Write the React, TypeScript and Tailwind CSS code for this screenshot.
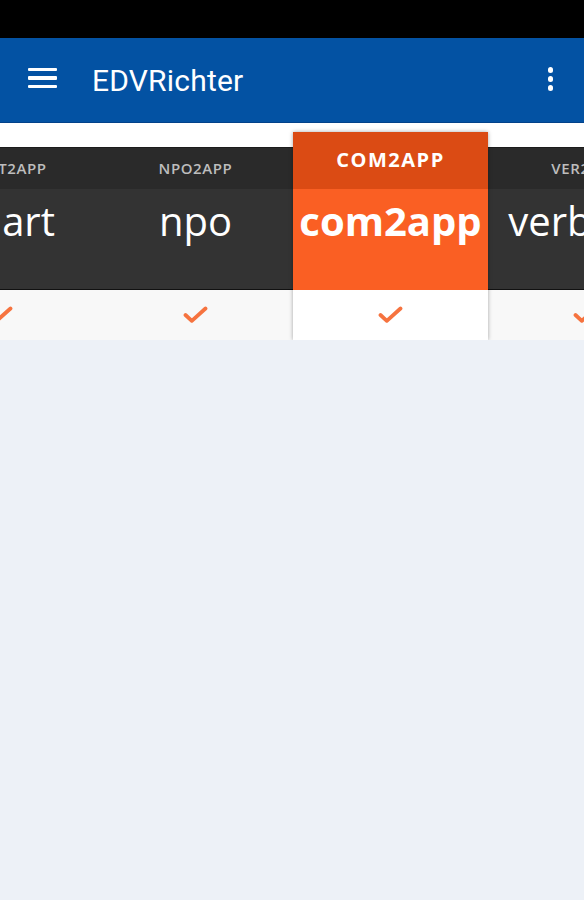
import { ReactNode } from 'react';

type App2 = {
  code: string;
  name: string;
  active?: boolean;
};

const apps: App2[] = [
  { code: 'SMART2APP', name: 'smart' },
  { code: 'NPO2APP', name: 'npo' },
  { code: 'COM2APP', name: 'com2app', active: true },
  { code: 'VER2APP', name: 'verband' },
];

function CheckMark() {
  return (
    <svg width="25" height="18" viewBox="0 0 25 18" fill="none">
      <path d="M2.5 9 8.8 14.8 22.5 2.5" stroke="#f6733f" strokeWidth="3.8" strokeLinecap="round" strokeLinejoin="round" />
    </svg>
  );
}

function Column({ app }: { app: App2 }): ReactNode {
  if (app.active) {
    return (
      <div className="w-[195px] shrink-0 flex flex-col relative z-10 shadow-[0_0_4px_rgba(0,0,0,0.35)]">
        <div className="h-[57px] bg-[#db4b14] flex items-center justify-center pb-[2px] text-[20px] font-bold tracking-[1.5px] text-white">
          {app.code}
        </div>
        <div className="h-[101px] bg-[#fa5f23] flex justify-center pt-[5px]">
          <span className="text-[40px] font-bold leading-[54px] text-white whitespace-nowrap">{app.name}</span>
        </div>
        <div className="h-[50px] bg-white flex items-center justify-center">
          <CheckMark />
        </div>
      </div>
    );
  }
  return (
    <div className="w-[195px] shrink-0 flex flex-col">
      <div className="h-[42px] bg-[#2a2a2a] border-t border-[#1c1c1c] flex items-center justify-center text-[15px] font-semibold tracking-[0.6px] text-[#bdbdbd] whitespace-nowrap">
        {app.code}
      </div>
      <div className="h-[101px] bg-[#333333] border-b border-[#111] flex justify-center pt-[5px]">
        <span className="text-[40px] leading-[54px] text-white whitespace-nowrap">{app.name}</span>
      </div>
      <div className="h-[50px] bg-[#f8f8f8] flex items-center justify-center">
        <CheckMark />
      </div>
    </div>
  );
}

export default function App() {
  return (
    <div className="w-[584px] h-[900px] bg-[#edf1f7] overflow-hidden flex flex-col">
      {/* status bar */}
      <div className="h-[38px] bg-black shrink-0" />

      {/* app bar */}
      <header className="h-[85px] shrink-0 bg-[#0352a3] border-b border-[#02428a] flex items-center pl-[28px] pr-[31px]">
        <div className="w-[29px] flex flex-col gap-[5px] mb-[4px]">
          <span className="h-[3.5px] bg-white rounded-[1px]" />
          <span className="h-[3.5px] bg-white rounded-[1px]" />
          <span className="h-[3.5px] bg-white rounded-[1px]" />
        </div>
        <h1 className="ml-[35px] text-[30px] leading-[36px] pt-[2px] text-white font-['Roboto',sans-serif] tracking-[0.2px]">EDVRichter</h1>
        <div className="ml-auto flex flex-col gap-[3.5px] mb-[2px]">
          <span className="w-[5.5px] h-[5.5px] rounded-full bg-white" />
          <span className="w-[5.5px] h-[5.5px] rounded-full bg-white" />
          <span className="w-[5.5px] h-[5.5px] rounded-full bg-white" />
        </div>
      </header>

      {/* app picker */}
      <section className="bg-white pt-[9px] overflow-hidden font-['Open_Sans',sans-serif]">
        <div className="flex items-end ml-[-97px]">
          {apps.map((a) => (
            <Column key={a.code} app={a} />
          ))}
        </div>
      </section>
    </div>
  );
}
